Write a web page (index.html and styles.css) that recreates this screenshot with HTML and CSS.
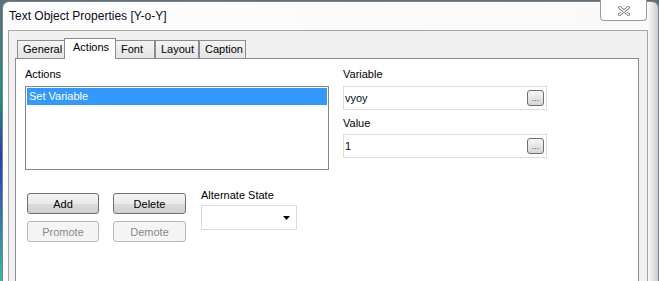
FILE: index.html
```html
<!DOCTYPE html>
<html lang="en">
<head>
    <meta charset="UTF-8">
    <title>Text Object Properties [Y-o-Y]</title>
    <link rel="stylesheet" href="styles.css">
</head>
<body>
    <div class="window">
        <div class="titlebar">
            <div class="title">Text Object Properties [Y-o-Y]</div>
            <div class="close">
                <svg width="14" height="10" viewBox="0 0 14 10">
                    <path d="M2.5 1.5 L11.5 8.5 M11.5 1.5 L2.5 8.5" stroke="#858585" stroke-width="3" stroke-linecap="round" fill="none"/>
                    <path d="M2.5 1.5 L11.5 8.5 M11.5 1.5 L2.5 8.5" stroke="#ffffff" stroke-width="1.3" stroke-linecap="round" fill="none"/>
                </svg>
            </div>
        </div>

        <div class="client">
            <div class="tabs">
                <div class="tab tab-general">General</div>
                <div class="tab tab-actions active">Actions</div>
                <div class="tab tab-font">Font</div>
                <div class="tab tab-layout">Layout</div>
                <div class="tab tab-caption">Caption</div>
            </div>

            <div class="panel">
                <div class="top">
                    <div class="left-col">
                        <label class="label">Actions</label>
                        <div class="listbox">
                            <div class="list-row selected">Set Variable</div>
                        </div>
                    </div>
                    <div class="right-col">
                        <label class="label">Variable</label>
                        <div class="field">
                            <span class="field-text">vyoy</span>
                            <span class="dots">...</span>
                        </div>
                        <label class="label label-gap">Value</label>
                        <div class="field field-second">
                            <span class="field-text">1</span>
                            <span class="dots">...</span>
                        </div>
                    </div>
                </div>

                <div class="bottom">
                    <div class="btn-col">
                        <button class="btn">Add</button>
                        <button class="btn" disabled>Promote</button>
                    </div>
                    <div class="btn-col second">
                        <button class="btn">Delete</button>
                        <button class="btn" disabled>Demote</button>
                    </div>
                    <div class="alt-state">
                        <label class="label">Alternate State</label>
                        <div class="dropdown">
                            <svg width="7" height="4" viewBox="0 0 7 4">
                                <path d="M0 0 H7 L3.5 4 Z" fill="#000"/>
                            </svg>
                        </div>
                    </div>
                </div>
            </div>
        </div>
    </div>
</body>
</html>
```

FILE: styles.css
```css
* {
    box-sizing: border-box;
}
body {
    margin: 0;
    padding: 1px 0 0 2px;
    width: 659px;
    height: 281px;
    overflow: hidden;
    background: linear-gradient(#5b6f7a, #1f8f7d 35%, #2a3cb5 55%, #2c54b8 65%, #36b9a3);
    font-family: "Liberation Sans", Arial, sans-serif;
    font-size: 11px;
    color: #000;
}
.window {
    width: 657px;
    height: 300px;
    border: 1px solid #7d8288;
    border-bottom: none;
    border-radius: 7px 7px 0 0;
    background: linear-gradient(to left, #cdcdcd, #f9f9f9 10px, #fdfdfd);
}
.titlebar {
    display: flex;
    align-items: flex-start;
    height: 28px;
}
.title {
    flex: 1;
    font-size: 12px;
    line-height: 14px;
    padding: 7px 0 0 6px;
    color: #0b0b1a;
}
.close {
    width: 47px;
    height: 21px;
    margin: -2px 11px 0 0;
    border: 1px solid #9a9a9a;
    border-top: none;
    border-radius: 0 0 4px 4px;
    background: #fff;
    display: flex;
    align-items: center;
    justify-content: center;
    padding-top: 2px;
}
.client {
    margin: 0 10px 0 5px;
    height: 262px;
    border: 1px solid #a5a5a5;
    border-bottom: none;
    background: #f0f0f0;
    padding: 7px 8px 0 6px;
}
.tabs {
    display: flex;
    align-items: flex-end;
    padding-left: 2px;
    margin-bottom: -1px;
    position: relative;
    z-index: 1;
}
.tab {
    height: 18px;
    line-height: 17px;
    margin-bottom: 1px;
    padding: 0 0 0 5px;
    border: 1px solid #898c95;
    border-bottom: none;
    background: linear-gradient(#f4f4f4, #e4e4e4);
    white-space: nowrap;
}
.tab-general {
    width: 48px;
}
.tab-actions {
    width: 52px;
    margin-left: -1px;
}
.tab-font {
    width: 40px;
    margin-left: -1px;
}
.tab-layout {
    width: 44px;
}
.tab-caption {
    width: 47px;
}
.tab.active {
    height: 21px;
    margin-bottom: 0;
    padding-left: 8px;
    background: #fff;
}
.panel {
    height: 240px;
    background: #fff;
    border: 1px solid #898c95;
    border-bottom: none;
    padding: 8px 0 0 9px;
}
.top {
    display: flex;
}
.left-col {
    width: 304px;
}
.right-col {
    width: 204px;
    margin-left: 14px;
}
.label {
    display: block;
    line-height: 14px;
    white-space: nowrap;
}
.label-gap {
    margin-top: 6px;
}
.listbox {
    margin-top: 5px;
    height: 84px;
    border: 1px solid #828790;
    padding: 1px;
}
.list-row {
    height: 17px;
    line-height: 17px;
    padding-left: 2px;
}
.list-row.selected {
    background: #3399ff;
    color: #fff;
}
.field {
    margin-top: 5px;
    height: 24px;
    border: 1px solid #dcdcdc;
    background: #fff;
    display: flex;
    align-items: center;
    justify-content: space-between;
    padding: 0 2px 0 1px;
}
.field-second {
    margin-top: 4px;
}
.field-text {
    color: #0a0a2a;
}
.dots {
    width: 17px;
    height: 16px;
    border: 1px solid #707070;
    border-radius: 3px;
    background: linear-gradient(#f6f6f6, #e6e6e6 50%, #d6d6d6);
    font-size: 9px;
    line-height: 9px;
    color: #3a3aa0;
    display: flex;
    align-items: flex-end;
    justify-content: center;
    padding-bottom: 2px;
}
.bottom {
    display: flex;
    margin-top: 18px;
}
.btn-col {
    display: flex;
    flex-direction: column;
    width: 72px;
    margin: 5px 0 0 2px;
}
.btn-col.second {
    width: 73px;
    margin-left: 14px;
}
.btn {
    height: 21px;
    padding: 0;
    font-family: inherit;
    font-size: 11px;
    color: #000;
    border: 1px solid #707070;
    border-radius: 3px;
    background: linear-gradient(#f3f3f3, #ebebeb 50%, #dcdcdc 50%, #d0d0d0);
}
.btn + .btn {
    margin-top: 7px;
}
.btn:disabled {
    color: #8a8a8a;
    border-color: #b5b8bb;
    background: #f4f4f4;
}
.alt-state {
    width: 96px;
    margin-left: 15px;
}
.dropdown {
    margin-top: 3px;
    height: 25px;
    border: 1px solid #dadada;
    background: #fff;
    display: flex;
    align-items: center;
    justify-content: flex-end;
    padding-right: 6px;
}
```
